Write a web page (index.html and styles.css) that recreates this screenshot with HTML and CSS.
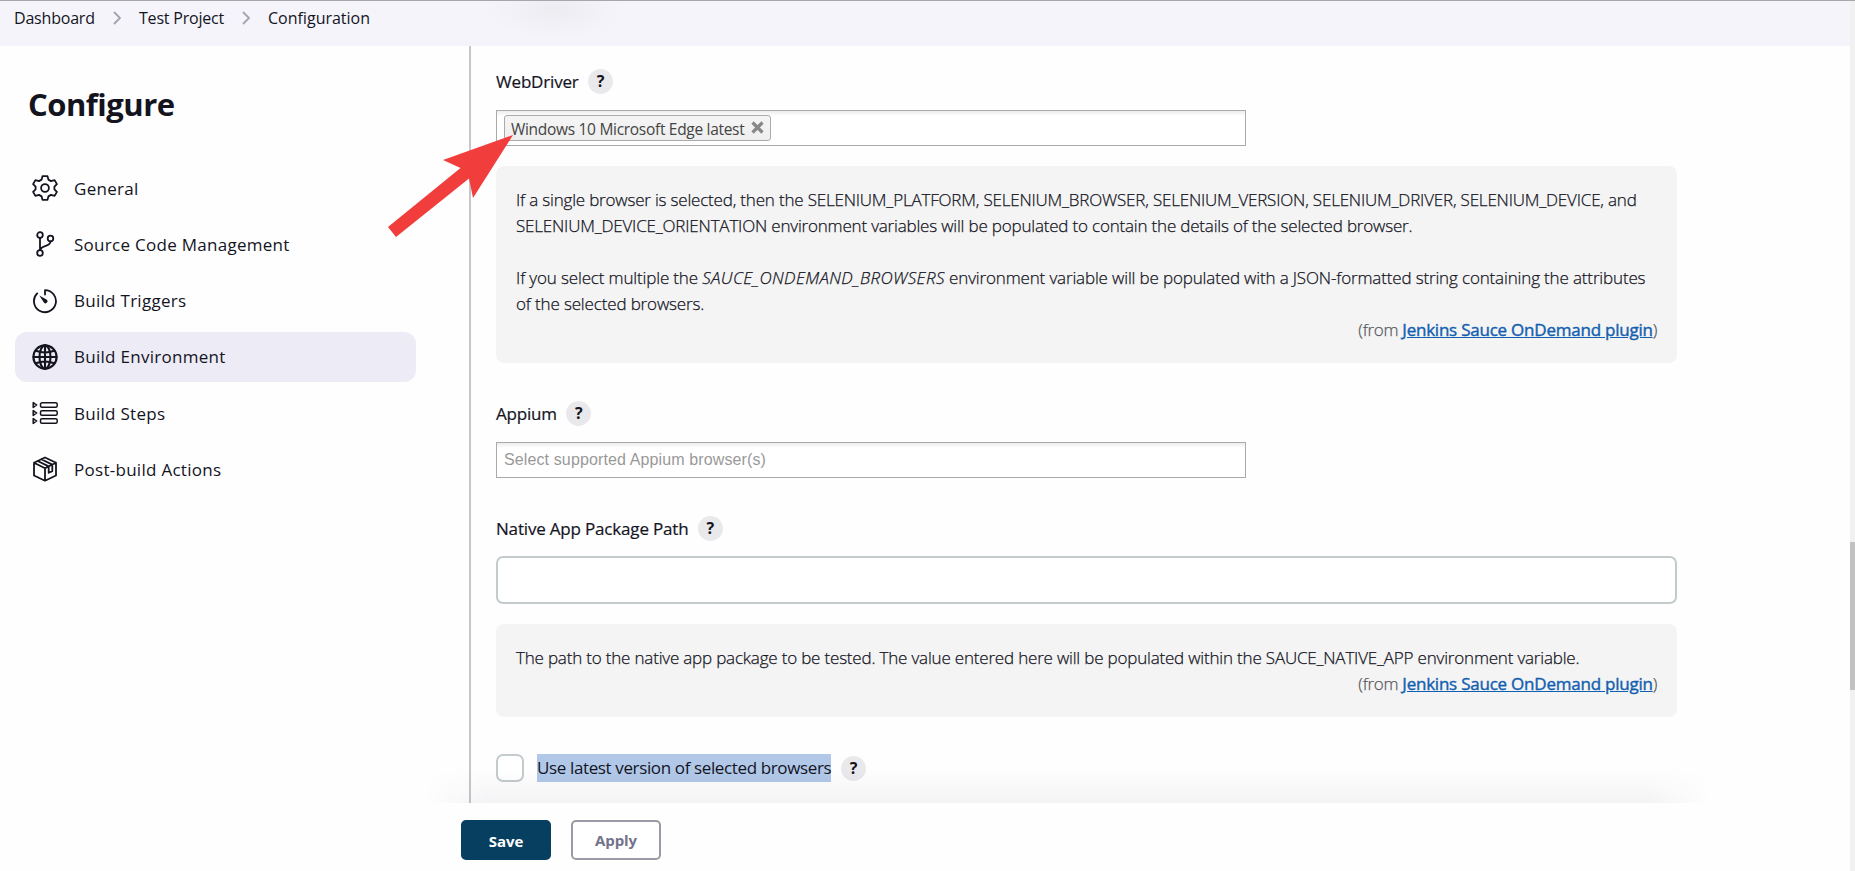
FILE: index.html
```html
<!DOCTYPE html>
<html lang="en">
<head>
  <meta charset="UTF-8">
  <meta name="viewport" content="width=device-width, initial-scale=1.0">
  <title>Test Project Config [Jenkins]</title>
  <link rel="stylesheet" href="styles.css">
</head>
<body>
  <header class="breadcrumbs">
    <a class="crumb crumb-dashboard">Dashboard</a>
    <svg class="chevron" viewBox="0 0 8 14"><path d="M1 1l6 6-6 6"/></svg>
    <a class="crumb crumb-project">Test Project</a>
    <svg class="chevron" viewBox="0 0 8 14"><path d="M1 1l6 6-6 6"/></svg>
    <a class="crumb crumb-config">Configuration</a>
  </header>

  <div class="page">
    <aside class="side-panel">
      <h1>Configure</h1>
      <nav class="tasks">
        <a class="task">
          <svg class="icon" viewBox="0 0 26 26"><circle cx="13" cy="13" r="3.9"/><path d="M10.5 1.200h5l.9 3.400 2.600 1.500 3.600-1 2.300 4-2.500 2.600v2.600l2.500 2.600-2.300 4-3.600-1-2.600 1.500-.9 3.400h-5l-.9-3.400L7 19.900l-3.600 1-2.300-4 2.500-2.600v-2.600L1.100 9.100l2.300-4 3.600 1 2.600-1.500z"/></svg>
          <span>General</span>
        </a>
        <a class="task">
          <svg class="icon" viewBox="0 0 26 26"><circle cx="8" cy="4" r="2.8"/><circle cx="18.500" cy="7.500" r="2.800"/><circle cx="8" cy="22" r="2.800"/><path d="M8 7v12M18.500 10.500c0 5.500-9 3-10.300 8.500"/></svg>
          <span>Source Code Management</span>
        </a>
        <a class="task">
          <svg class="icon" viewBox="0 0 26 26"><path d="M13 6.500V2.200a11 11 0 1 1-7.800 3.200"/><path class="solid" d="M7.300 7.600l7.600 4.100a2 2 0 0 1-2.800 3z"/></svg>
          <span>Build Triggers</span>
        </a>
        <a class="task active">
          <svg class="icon globe" viewBox="0 0 26 26"><circle cx="13" cy="13" r="11.600"/><ellipse cx="13" cy="13" rx="5.500" ry="11.600"/><path d="M13 1.500v23M1.500 13h23M3.800 6.800c5.500 2 13 2 18.400 0M3.800 19.200c5.500-2 13-2 18.400 0"/></svg>
          <span>Build Environment</span>
        </a>
        <a class="task">
          <svg class="icon steps" viewBox="0 0 26 26"><rect x="8.500" y="2.800" width="16.700" height="4.400" rx="1.500"/><rect x="8.500" y="10.800" width="16.700" height="4.400" rx="1.500"/><rect x="8.500" y="18.800" width="16.700" height="4.400" rx="1.500"/><path d="M1.200 2.600v4.800l3.500-2.400zM1.200 10.600v4.800l3.500-2.400zM1.200 18.600v4.800l3.500-2.400z"/></svg>
          <span>Build Steps</span>
        </a>
        <a class="task">
          <svg class="icon" viewBox="0 0 26 26"><path d="M13 1.500l11 5.300v12.700l-11 5.200-11-5.200V6.800zM2 6.800l11 5.400 11-5.400M13 12.200v12.500M5.700 5l11 5.400M9.300 3.300l11 5.300v6.500l-3.600 1.700v-6.400"/></svg>
          <span>Post-build Actions</span>
        </a>
      </nav>
    </aside>

    <main class="config">
      <section class="field">
        <div class="label-row"><label>WebDriver</label><button class="help-btn">?</button></div>
        <div class="chosen">
          <div class="chip">
            <span>Windows 10 Microsoft Edge latest</span>
            <svg class="chip-close" viewBox="0 0 12 12"><path d="M2 2l8 8M10 2l-8 8"/></svg>
          </div>
        </div>
        <div class="help">
          <p>If a single browser is selected, then the SELENIUM_PLATFORM, SELENIUM_BROWSER, SELENIUM_VERSION, SELENIUM_DRIVER, SELENIUM_DEVICE, and<br>
          SELENIUM_DEVICE_ORIENTATION environment variables will be populated to contain the details of the selected browser.</p>
          <p>If you select multiple the <i>SAUCE_ONDEMAND_BROWSERS</i> environment variable will be populated with a JSON-formatted string containing the attributes<br>
          of the selected browsers.</p>
          <div class="from">(from <a>Jenkins Sauce OnDemand plugin</a>)</div>
        </div>
      </section>

      <section class="field field-appium">
        <div class="label-row"><label>Appium</label><button class="help-btn">?</button></div>
        <div class="chosen"><span class="placeholder">Select supported Appium browser(s)</span></div>
      </section>

      <section class="field field-native">
        <div class="label-row"><label>Native App Package Path</label><button class="help-btn">?</button></div>
        <input class="text-input" type="text">
        <div class="help">
          <p>The path to the native app package to be tested. The value entered here will be populated within the SAUCE_NATIVE_APP environment variable.</p>
          <div class="from">(from <a>Jenkins Sauce OnDemand plugin</a>)</div>
        </div>
      </section>

      <section class="check-row">
        <span class="checkbox"></span>
        <label class="selected">Use latest version of selected browsers</label>
        <button class="help-btn">?</button>
      </section>
    </main>
  </div>

  <footer class="bottom-bar">
    <button class="btn primary">Save</button>
    <button class="btn">Apply</button>
  </footer>

  <div class="bar-shadow"></div>
  <div class="scrollbar"><div class="thumb"></div></div>
  <svg class="arrow" viewBox="0 0 126 103"><path d="M125 1L55 26l17.500 8L0 93l8 10 73-58.500L85 64z"/></svg>
</body>
</html>
```
FILE: styles.css
```css
* {
  box-sizing: border-box;
}
body {
  margin: 0;
  height: 871px;
  display: flex;
  flex-direction: column;
  overflow: hidden;
  position: relative;
  font-family: "Open Sans", "Noto Sans", sans-serif;
  font-size: 17px;
  color: #14141f;
  background: #fefefe;
}
p {
  margin: 0;
}
button {
  font-family: inherit;
  padding: 0;
}
.breadcrumbs {
  height: 46px;
  flex: none;
  display: flex;
  align-items: flex-start;
  padding: 5px 14px;
  border-top: 1px solid #a8a5ad;
  background: radial-gradient(ellipse 65px 30px at 555px 8px, #ececf1, rgba(236, 236, 241, 0)), #f4f4fa;
  font-size: 16px;
  line-height: 24px;
  white-space: nowrap;
}
.chevron {
  width: 8px;
  height: 14px;
  margin: 5px 18px 0;
  fill: none;
  stroke: #a3a3ab;
  stroke-width: 1.8;
}
.crumb-dashboard {
  width: 81px;
  letter-spacing: -0.2px;
}
.crumb-project {
  width: 85px;
  letter-spacing: -0.2px;
}
.page {
  flex: none;
  height: 757px;
  display: flex;
}
.side-panel {
  width: 471px;
  border-right: 2px solid #c3c8cb;
}
h1 {
  margin: 35px 0 0 28px;
  font-size: 31px;
  line-height: 46px;
  letter-spacing: -0.5px;
}
.tasks {
  display: flex;
  flex-direction: column;
  gap: 6.250px;
  margin: 36px 0 0 15px;
  letter-spacing: 0.28px;
}
.task {
  display: flex;
  align-items: center;
  gap: 16px;
  width: 401px;
  height: 50px;
  padding-left: 17px;
  border-radius: 12px;
  white-space: nowrap;
}
.task.active {
  background: #ecebf6;
}
.icon {
  width: 26px;
  height: 26px;
  fill: none;
  stroke: #14141f;
  stroke-width: 1.8;
  stroke-linejoin: round;
  stroke-linecap: round;
}
.icon.globe {
  stroke-width: 2.1;
}
.icon.steps {
  stroke-width: 1.5;
}
.icon .solid {
  fill: #14141f;
  stroke: none;
}
.config {
  width: 1206px;
  padding: 21px 0 0 25px;
  white-space: nowrap;
}
.label-row {
  display: flex;
  align-items: center;
  gap: 9.500px;
  height: 28px;
  letter-spacing: -0.18px;
}
.label-row label {
  -webkit-text-stroke: 0.2px;
}
.help-btn {
  width: 25px;
  height: 25px;
  border: 0;
  border-radius: 50%;
  background: #e9e9ec;
  color: #14141f;
  font-size: 16px;
  font-weight: 700;
  line-height: 25px;
}
.chosen {
  width: 750px;
  height: 36px;
  margin-top: 15px;
  padding: 4px 7px;
  border: 1px solid #aaa;
  background: linear-gradient(#eee 1%, #fff 15%);
}
.chip {
  display: flex;
  justify-content: space-between;
  width: 267px;
  height: 26px;
  padding: 0 5px 0 6px;
  border: 1px solid #aaa;
  border-radius: 3px;
  background: linear-gradient(#f4f4f4 20%, #eee);
  color: #444;
  font-size: 15.500px;
  line-height: 27px;
  letter-spacing: -0.3px;
}
.chip-close {
  flex: none;
  width: 15px;
  height: 15px;
  margin-top: 4px;
  stroke: #888;
  stroke-width: 2.6;
}
.help {
  width: 1181px;
  margin-top: 20px;
  padding: 21px 20px 20px;
  border-radius: 8px;
  background: #f4f4f4;
  font-weight: 300;
  line-height: 26px;
  letter-spacing: -0.19px;
  -webkit-text-stroke: 0.25px;
}
.help p + p {
  margin-top: 26px;
  letter-spacing: -0.15px;
}
.help i {
  letter-spacing: 0.37px;
}
.from {
  color: #5a5a62;
  letter-spacing: -0.3px;
  text-align: right;
}
.from a {
  color: #1160b0;
  font-weight: 400;
  letter-spacing: -0.23px;
  text-decoration: underline;
  -webkit-text-stroke: 0.4px;
}
.field-appium {
  margin-top: 36px;
}
.placeholder {
  color: #999;
  font-family: "Liberation Sans", sans-serif;
  font-size: 16px;
  line-height: 25px;
  letter-spacing: 0.12px;
}
.field-native {
  margin-top: 36px;
}
.text-input {
  display: block;
  width: 1181px;
  height: 48px;
  margin-top: 14px;
  border: 2px solid #c3cbcd;
  border-radius: 7px;
  background: #fff;
}
.check-row {
  display: flex;
  align-items: center;
  height: 28px;
  margin-top: 37px;
}
.checkbox {
  width: 28px;
  height: 28px;
  margin-right: 13px;
  border: 2px solid #c3cbcd;
  border-radius: 7px;
  background: #fff;
}
.selected {
  width: 294px;
  height: 28px;
  margin-right: 10px;
  background: #b1c8e8;
  line-height: 28px;
  letter-spacing: -0.37px;
}
.bottom-bar {
  flex: 1;
  display: flex;
  gap: 20px;
  padding: 17px 461px;
}
.btn {
  width: 90px;
  height: 40px;
  border: 2px solid #9b9ba5;
  border-radius: 5px;
  background: #fff;
  color: #73738c;
  font-size: 15px;
  font-weight: 700;
  letter-spacing: -0.1px;
}
.btn.primary {
  border-color: #063f60;
  background: #063f60;
  color: #fff;
  padding-top: 2px;
}
.bar-shadow {
  position: absolute;
  left: 425px;
  top: 768px;
  width: 1285px;
  height: 35px;
  background: linear-gradient(rgba(20, 20, 60, 0), rgba(20, 20, 60, 0.045));
  -webkit-mask-image: linear-gradient(90deg, transparent, #000 60px, #000 1225px, transparent);
}
.scrollbar {
  position: absolute;
  right: 0;
  top: 1px;
  width: 5px;
  height: 870px;
  padding-top: 541px;
  background: #f1f1f1;
}
.thumb {
  height: 148px;
  background: #c1c1c1;
}
.arrow {
  position: absolute;
  left: 388px;
  top: 134px;
  width: 126px;
  height: 103px;
  fill: #f23d3d;
}
```
